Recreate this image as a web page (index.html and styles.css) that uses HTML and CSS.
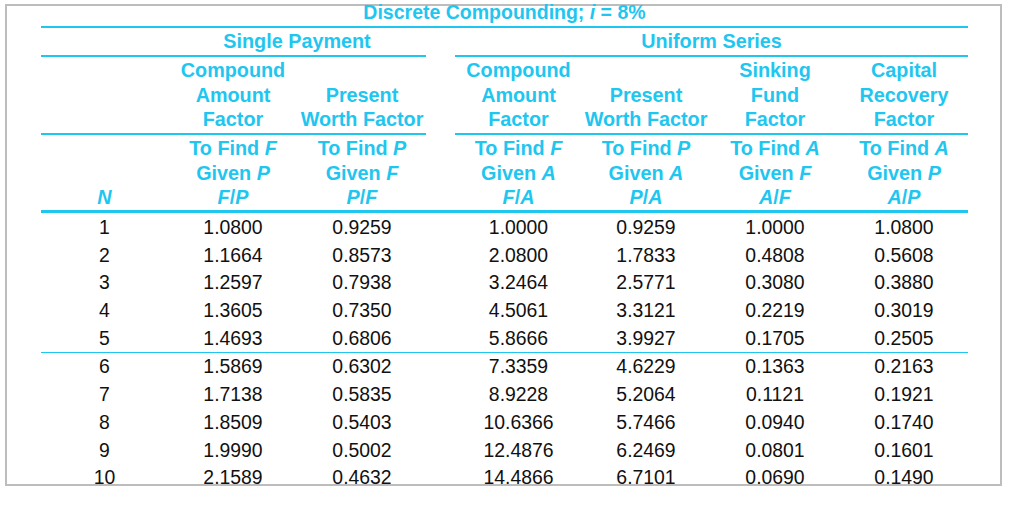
FILE: index.html
```html
<!DOCTYPE html>
<html lang="en">
<head>
<meta charset="utf-8">
<title>Discrete Compounding; i = 8%</title>
<link rel="stylesheet" href="styles.css">
</head>
<body>
<div class="frame">
  <div class="tbl">
    <div class="title">Discrete Compounding; <i>i</i> = 8%</div>

    <div class="row grp">
      <div class="cell ln"></div>
      <div class="cell ln span2">Single Payment</div>
      <div class="cell"></div>
      <div class="cell ln span4">Uniform Series</div>
    </div>

    <div class="row fac">
      <div class="cell ln"></div>
      <div class="cell ln"><div class="in">Compound<br>Amount<br>Factor</div></div>
      <div class="cell ln"><div class="in">Present<br>Worth Factor</div></div>
      <div class="cell"></div>
      <div class="cell ln"><div class="in">Compound<br>Amount<br>Factor</div></div>
      <div class="cell ln"><div class="in">Present<br>Worth Factor</div></div>
      <div class="cell ln"><div class="in">Sinking<br>Fund<br>Factor</div></div>
      <div class="cell ln"><div class="in">Capital<br>Recovery<br>Factor</div></div>
    </div>

    <div class="row sub">
      <div class="cell"><div class="in"><i>N</i></div></div>
      <div class="cell"><div class="in">To Find <i>F</i><br>Given <i>P</i><br><i>F</i>/<i>P</i></div></div>
      <div class="cell"><div class="in">To Find <i>P</i><br>Given <i>F</i><br><i>P</i>/<i>F</i></div></div>
      <div class="cell"></div>
      <div class="cell"><div class="in">To Find <i>F</i><br>Given <i>A</i><br><i>F</i>/<i>A</i></div></div>
      <div class="cell"><div class="in">To Find <i>P</i><br>Given <i>A</i><br><i>P</i>/<i>A</i></div></div>
      <div class="cell"><div class="in">To Find <i>A</i><br>Given <i>F</i><br><i>A</i>/<i>F</i></div></div>
      <div class="cell"><div class="in">To Find <i>A</i><br>Given <i>P</i><br><i>A</i>/<i>P</i></div></div>
    </div>

    <div class="body">
      <div class="group first">
        <div class="row data"><span>1</span><span>1.0800</span><span>0.9259</span><span></span><span>1.0000</span><span>0.9259</span><span>1.0000</span><span>1.0800</span></div>
        <div class="row data"><span>2</span><span>1.1664</span><span>0.8573</span><span></span><span>2.0800</span><span>1.7833</span><span>0.4808</span><span>0.5608</span></div>
        <div class="row data"><span>3</span><span>1.2597</span><span>0.7938</span><span></span><span>3.2464</span><span>2.5771</span><span>0.3080</span><span>0.3880</span></div>
        <div class="row data"><span>4</span><span>1.3605</span><span>0.7350</span><span></span><span>4.5061</span><span>3.3121</span><span>0.2219</span><span>0.3019</span></div>
        <div class="row data"><span>5</span><span>1.4693</span><span>0.6806</span><span></span><span>5.8666</span><span>3.9927</span><span>0.1705</span><span>0.2505</span></div>
      </div>
      <div class="group">
        <div class="row data"><span>6</span><span>1.5869</span><span>0.6302</span><span></span><span>7.3359</span><span>4.6229</span><span>0.1363</span><span>0.2163</span></div>
        <div class="row data"><span>7</span><span>1.7138</span><span>0.5835</span><span></span><span>8.9228</span><span>5.2064</span><span>0.1121</span><span>0.1921</span></div>
        <div class="row data"><span>8</span><span>1.8509</span><span>0.5403</span><span></span><span>10.6366</span><span>5.7466</span><span>0.0940</span><span>0.1740</span></div>
        <div class="row data"><span>9</span><span>1.9990</span><span>0.5002</span><span></span><span>12.4876</span><span>6.2469</span><span>0.0801</span><span>0.1601</span></div>
        <div class="row data"><span>10</span><span>2.1589</span><span>0.4632</span><span></span><span>14.4866</span><span>6.7101</span><span>0.0690</span><span>0.1490</span></div>
      </div>
    </div>
  </div>
</div>
</body>
</html>
```

FILE: styles.css
```css
html, body {
  margin: 0;
  padding: 0;
  background: #ffffff;
}

body {
  font-family: "Liberation Sans", Arial, sans-serif;
  width: 1024px;
  height: 517px;
  overflow: hidden;
}

.frame {
  box-sizing: border-box;
  margin: 4px 0 0 5px;
  width: 997px;
  height: 482px;
  border: 2px solid #bdbdbd;
}

.tbl {
  width: 927px;
  margin-left: 34px;
  color: #1ec6f0;
  font-weight: bold;
  font-size: 19.8px;
}

.title {
  margin-top: -4px;
  line-height: 20px;
  padding-bottom: 4px;
  border-bottom: 2px solid #1ec6f0;
  text-align: center;
  font-size: 19.5px;
}

.row {
  display: grid;
  grid-template-columns: 127px 130px 128px 29px 127px 128px 130px 128px;
}

.cell {
  text-align: center;
  box-sizing: border-box;
}

.ln {
  border-bottom: 2px solid #1ec6f0;
}

.span2 {
  grid-column: span 2;
}

.span4 {
  grid-column: span 4;
}

.grp .cell {
  line-height: 26px;
  padding-bottom: 1px;
}

.fac .cell {
  height: 78px;
  line-height: 24.5px;
  padding-top: 1px;
  padding-bottom: 1.5px;
  display: flex;
  flex-direction: column;
  justify-content: flex-end;
}

.sub {
  border-bottom: 3px solid #1ec6f0;
}

.sub .cell {
  height: 75px;
  line-height: 24.5px;
  padding-top: 1px;
  padding-bottom: 0.5px;
  display: flex;
  flex-direction: column;
  justify-content: flex-end;
}

.body {
  padding-top: 1px;
  color: #111111;
  font-weight: normal;
  font-size: 19.4px;
}

.group.first {
  border-bottom: 1px solid #1ec6f0;
}

.data {
  height: 27.7px;
  line-height: 27.7px;
}

.data span {
  text-align: center;
}
```
